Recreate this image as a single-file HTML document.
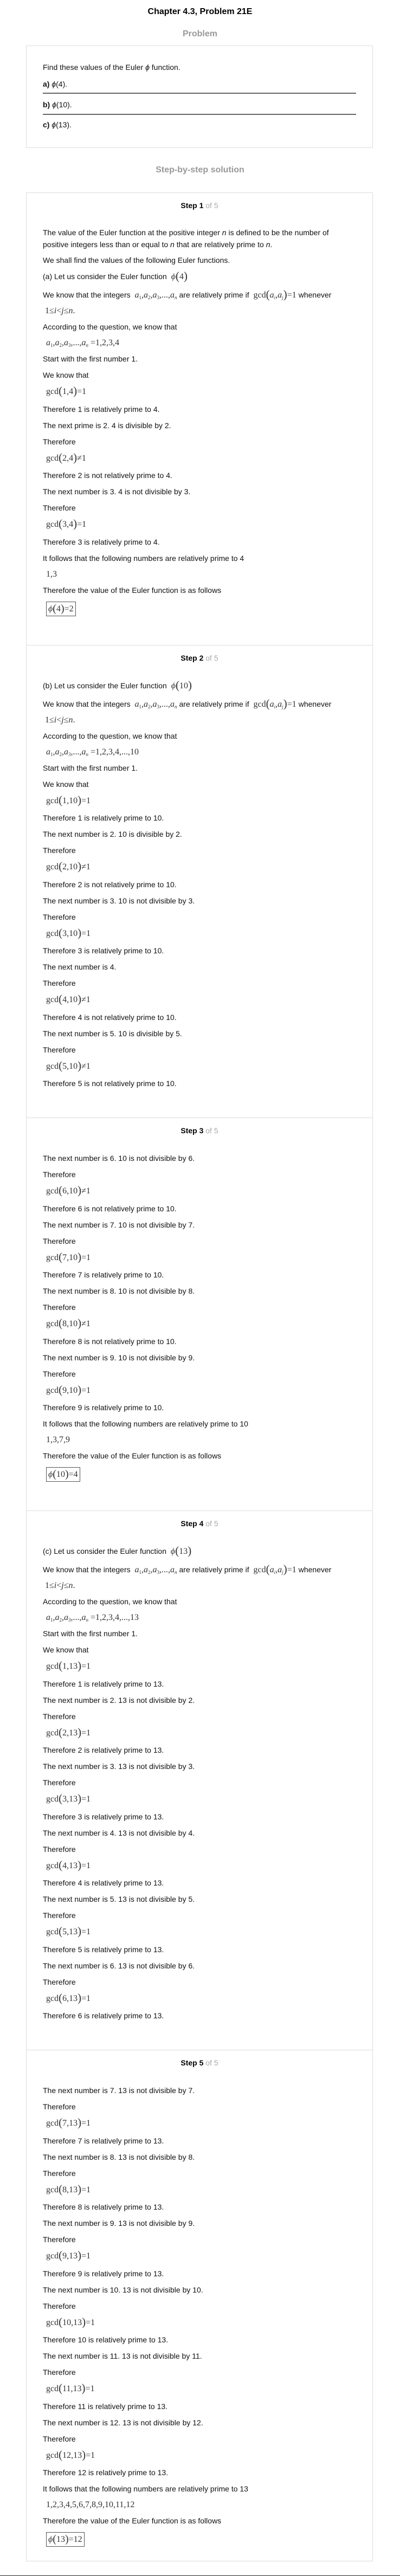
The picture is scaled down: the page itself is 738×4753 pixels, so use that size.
<!DOCTYPE html>
<html><head><meta charset="utf-8">
<style>
*{box-sizing:border-box}
html,body{margin:0;padding:0;background:#fff}
body{width:738px;height:4753px;position:relative;font-family:"Liberation Sans",Arial,sans-serif;font-size:14px;color:#111;overflow:hidden}
h1{position:absolute;top:12px;left:0;width:738px;margin:0;text-align:center;font-size:16px;line-height:20px;font-weight:bold;color:#000}
.sec{position:absolute;left:0;width:738px;margin:0;text-align:center;font-size:16px;line-height:20px;font-weight:bold;color:#999}
.pbox{position:absolute;left:48px;top:84px;width:640px;height:189px;border:1px solid #ddd;padding:0 30px}
.pl{position:absolute;left:30px;line-height:18px}
.hr{position:absolute;left:30px;right:30px;height:2px;background:#666}
.sbox{position:absolute;left:48px;top:355px;width:640px;height:4371px;border:1px solid #ddd}
.step{padding:14px 30px 48px;border-top:1px solid #ddd}
.step:first-child{border-top:none}
.lab{text-align:center;line-height:18px;margin-bottom:27px;color:#000}
.lab b{font-weight:bold}.lab span{color:#aaa}
.t{height:30px;line-height:30px;white-space:nowrap}
.p2{padding:3px 0;line-height:22px}
.wk{padding-top:5px;line-height:29px;height:63px;white-space:nowrap}
.m,.l{font-family:"Liberation Serif","Times New Roman",serif;font-size:16px;color:#333;padding-left:6px;white-space:nowrap}
.m{height:32.5px;line-height:32.5px}
.l{height:29px;line-height:29px}
.mi{font-family:"Liberation Serif","Times New Roman",serif;font-size:16px;color:#333;padding:0 4px}
.pa{font-size:21px;font-weight:lighter;vertical-align:-1px;line-height:0}
sub{font-size:9px;vertical-align:-3px;line-height:0}
.ans{height:38px;padding-top:6px}
.ans > span{display:inline-block;margin-left:6px;border:1px solid #555;padding:0 3px;font-family:"Liberation Serif","Times New Roman",serif;font-size:16px;line-height:25px;color:#333}
.ans .pa{border:none;padding:0;margin:0;display:inline;font-size:20px}
.bot{position:absolute;left:0;top:4752px;width:738px;height:1px;background:#222}
</style></head><body>
<h1>Chapter 4.3, Problem 21E</h1>
<div class="sec" style="top:53px">Problem</div>
<div class="pbox">
<div class="pl" style="top:30px">Find these values of the Euler <i>ϕ</i> function.</div>
<div class="pl" style="top:61px"><b>a)</b> <i>ϕ</i>(4).</div>
<div class="hr" style="top:86px"></div>
<div class="pl" style="top:99px"><b>b)</b> <i>ϕ</i>(10).</div>
<div class="hr" style="top:125px"></div>
<div class="pl" style="top:136px"><b>c)</b> <i>ϕ</i>(13).</div>
</div>
<div class="sec" style="top:304px">Step-by-step solution</div>

<div class="sbox">
<div class="step">
<div class="lab"><b>Step 1</b> <span>of 5</span></div>
<div class="p2">The value of the Euler function at the positive integer <i>n</i> is defined to be the number of positive integers less than or equal to <i>n</i> that are relatively prime to <i>n</i>.</div>
<div class="t">We shall find the values of the following Euler functions.</div>
<div class="t">(a) Let us consider the Euler function <span class="mi"><i>ϕ</i><span class="pa">(</span>4<span class="pa">)</span></span></div>
<div class="wk">We know that the integers <span class="mi"><i>a</i><sub>1</sub>,<i>a</i><sub>2</sub>,<i>a</i><sub>3</sub>,...,<i>a</i><sub><i>n</i></sub></span>are relatively prime if <span class="mi">gcd<span class="pa">(</span><i>a</i><sub><i>i</i></sub>,<i>a</i><sub><i>j</i></sub><span class="pa">)</span>=1</span>whenever<br><span class="mi">1≤<i>i</i>&lt;<i>j</i>≤<i>n</i>.</span></div>
<div class="t">According to the question, we know that</div>
<div class="l"><i>a</i><sub>1</sub>,<i>a</i><sub>2</sub>,<i>a</i><sub>3</sub>,...,<i>a</i><sub><i>n</i></sub> =1,2,3,4</div>
<div class="t">Start with the first number 1.</div>
<div class="t">We know that</div>
<div class="m">gcd<span class="pa">(</span>1,4<span class="pa">)</span>=1</div>
<div class="t">Therefore 1 is relatively prime to 4.</div>
<div class="t">The next prime is 2. 4 is divisible by 2.</div>
<div class="t">Therefore</div>
<div class="m">gcd<span class="pa">(</span>2,4<span class="pa">)</span>≠1</div>
<div class="t">Therefore 2 is not relatively prime to 4.</div>
<div class="t">The next number is 3. 4 is not divisible by 3.</div>
<div class="t">Therefore</div>
<div class="m">gcd<span class="pa">(</span>3,4<span class="pa">)</span>=1</div>
<div class="t">Therefore 3 is relatively prime to 4.</div>
<div class="t">It follows that the following numbers are relatively prime to 4</div>
<div class="l">1,3</div>
<div class="t">Therefore the value of the Euler function is as follows</div>
<div class="ans"><span><i>ϕ</i><span class="pa">(</span>4<span class="pa">)</span>=2</span></div>
</div>
<div class="step">
<div class="lab"><b>Step 2</b> <span>of 5</span></div>
<div class="t">(b) Let us consider the Euler function <span class="mi"><i>ϕ</i><span class="pa">(</span>10<span class="pa">)</span></span></div>
<div class="wk">We know that the integers <span class="mi"><i>a</i><sub>1</sub>,<i>a</i><sub>2</sub>,<i>a</i><sub>3</sub>,...,<i>a</i><sub><i>n</i></sub></span>are relatively prime if <span class="mi">gcd<span class="pa">(</span><i>a</i><sub><i>i</i></sub>,<i>a</i><sub><i>j</i></sub><span class="pa">)</span>=1</span>whenever<br><span class="mi">1≤<i>i</i>&lt;<i>j</i>≤<i>n</i>.</span></div>
<div class="t">According to the question, we know that</div>
<div class="l"><i>a</i><sub>1</sub>,<i>a</i><sub>2</sub>,<i>a</i><sub>3</sub>,...,<i>a</i><sub><i>n</i></sub> =1,2,3,4,...,10</div>
<div class="t">Start with the first number 1.</div>
<div class="t">We know that</div>
<div class="m">gcd<span class="pa">(</span>1,10<span class="pa">)</span>=1</div>
<div class="t">Therefore 1 is relatively prime to 10.</div>
<div class="t">The next number is 2. 10 is divisible by 2.</div>
<div class="t">Therefore</div>
<div class="m">gcd<span class="pa">(</span>2,10<span class="pa">)</span>≠1</div>
<div class="t">Therefore 2 is not relatively prime to 10.</div>
<div class="t">The next number is 3. 10 is not divisible by 3.</div>
<div class="t">Therefore</div>
<div class="m">gcd<span class="pa">(</span>3,10<span class="pa">)</span>=1</div>
<div class="t">Therefore 3 is relatively prime to 10.</div>
<div class="t">The next number is 4.</div>
<div class="t">Therefore</div>
<div class="m">gcd<span class="pa">(</span>4,10<span class="pa">)</span>≠1</div>
<div class="t">Therefore 4 is not relatively prime to 10.</div>
<div class="t">The next number is 5. 10 is divisible by 5.</div>
<div class="t">Therefore</div>
<div class="m">gcd<span class="pa">(</span>5,10<span class="pa">)</span>≠1</div>
<div class="t">Therefore 5 is not relatively prime to 10.</div>
</div>
<div class="step">
<div class="lab"><b>Step 3</b> <span>of 5</span></div>
<div class="t">The next number is 6. 10 is not divisible by 6.</div>
<div class="t">Therefore</div>
<div class="m">gcd<span class="pa">(</span>6,10<span class="pa">)</span>≠1</div>
<div class="t">Therefore 6 is not relatively prime to 10.</div>
<div class="t">The next number is 7. 10 is not divisible by 7.</div>
<div class="t">Therefore</div>
<div class="m">gcd<span class="pa">(</span>7,10<span class="pa">)</span>=1</div>
<div class="t">Therefore 7 is relatively prime to 10.</div>
<div class="t">The next number is 8. 10 is not divisible by 8.</div>
<div class="t">Therefore</div>
<div class="m">gcd<span class="pa">(</span>8,10<span class="pa">)</span>≠1</div>
<div class="t">Therefore 8 is not relatively prime to 10.</div>
<div class="t">The next number is 9. 10 is not divisible by 9.</div>
<div class="t">Therefore</div>
<div class="m">gcd<span class="pa">(</span>9,10<span class="pa">)</span>=1</div>
<div class="t">Therefore 9 is relatively prime to 10.</div>
<div class="t">It follows that the following numbers are relatively prime to 10</div>
<div class="l">1,3,7,9</div>
<div class="t">Therefore the value of the Euler function is as follows</div>
<div class="ans"><span><i>ϕ</i><span class="pa">(</span>10<span class="pa">)</span>=4</span></div>
</div>
<div class="step">
<div class="lab"><b>Step 4</b> <span>of 5</span></div>
<div class="t">(c) Let us consider the Euler function <span class="mi"><i>ϕ</i><span class="pa">(</span>13<span class="pa">)</span></span></div>
<div class="wk">We know that the integers <span class="mi"><i>a</i><sub>1</sub>,<i>a</i><sub>2</sub>,<i>a</i><sub>3</sub>,...,<i>a</i><sub><i>n</i></sub></span>are relatively prime if <span class="mi">gcd<span class="pa">(</span><i>a</i><sub><i>i</i></sub>,<i>a</i><sub><i>j</i></sub><span class="pa">)</span>=1</span>whenever<br><span class="mi">1≤<i>i</i>&lt;<i>j</i>≤<i>n</i>.</span></div>
<div class="t">According to the question, we know that</div>
<div class="l"><i>a</i><sub>1</sub>,<i>a</i><sub>2</sub>,<i>a</i><sub>3</sub>,...,<i>a</i><sub><i>n</i></sub> =1,2,3,4,...,13</div>
<div class="t">Start with the first number 1.</div>
<div class="t">We know that</div>
<div class="m">gcd<span class="pa">(</span>1,13<span class="pa">)</span>=1</div>
<div class="t">Therefore 1 is relatively prime to 13.</div>
<div class="t">The next number is 2. 13 is not divisible by 2.</div>
<div class="t">Therefore</div>
<div class="m">gcd<span class="pa">(</span>2,13<span class="pa">)</span>=1</div>
<div class="t">Therefore 2 is relatively prime to 13.</div>
<div class="t">The next number is 3. 13 is not divisible by 3.</div>
<div class="t">Therefore</div>
<div class="m">gcd<span class="pa">(</span>3,13<span class="pa">)</span>=1</div>
<div class="t">Therefore 3 is relatively prime to 13.</div>
<div class="t">The next number is 4. 13 is not divisible by 4.</div>
<div class="t">Therefore</div>
<div class="m">gcd<span class="pa">(</span>4,13<span class="pa">)</span>=1</div>
<div class="t">Therefore 4 is relatively prime to 13.</div>
<div class="t">The next number is 5. 13 is not divisible by 5.</div>
<div class="t">Therefore</div>
<div class="m">gcd<span class="pa">(</span>5,13<span class="pa">)</span>=1</div>
<div class="t">Therefore 5 is relatively prime to 13.</div>
<div class="t">The next number is 6. 13 is not divisible by 6.</div>
<div class="t">Therefore</div>
<div class="m">gcd<span class="pa">(</span>6,13<span class="pa">)</span>=1</div>
<div class="t">Therefore 6 is relatively prime to 13.</div>
</div>
<div class="step">
<div class="lab"><b>Step 5</b> <span>of 5</span></div>
<div class="t">The next number is 7. 13 is not divisible by 7.</div>
<div class="t">Therefore</div>
<div class="m">gcd<span class="pa">(</span>7,13<span class="pa">)</span>=1</div>
<div class="t">Therefore 7 is relatively prime to 13.</div>
<div class="t">The next number is 8. 13 is not divisible by 8.</div>
<div class="t">Therefore</div>
<div class="m">gcd<span class="pa">(</span>8,13<span class="pa">)</span>=1</div>
<div class="t">Therefore 8 is relatively prime to 13.</div>
<div class="t">The next number is 9. 13 is not divisible by 9.</div>
<div class="t">Therefore</div>
<div class="m">gcd<span class="pa">(</span>9,13<span class="pa">)</span>=1</div>
<div class="t">Therefore 9 is relatively prime to 13.</div>
<div class="t">The next number is 10. 13 is not divisible by 10.</div>
<div class="t">Therefore</div>
<div class="m">gcd<span class="pa">(</span>10,13<span class="pa">)</span>=1</div>
<div class="t">Therefore 10 is relatively prime to 13.</div>
<div class="t">The next number is 11. 13 is not divisible by 11.</div>
<div class="t">Therefore</div>
<div class="m">gcd<span class="pa">(</span>11,13<span class="pa">)</span>=1</div>
<div class="t">Therefore 11 is relatively prime to 13.</div>
<div class="t">The next number is 12. 13 is not divisible by 12.</div>
<div class="t">Therefore</div>
<div class="m">gcd<span class="pa">(</span>12,13<span class="pa">)</span>=1</div>
<div class="t">Therefore 12 is relatively prime to 13.</div>
<div class="t">It follows that the following numbers are relatively prime to 13</div>
<div class="l">1,2,3,4,5,6,7,8,9,10,11,12</div>
<div class="t">Therefore the value of the Euler function is as follows</div>
<div class="ans"><span><i>ϕ</i><span class="pa">(</span>13<span class="pa">)</span>=12</span></div>
</div>
</div>
<div class="bot"></div>
</body></html>
